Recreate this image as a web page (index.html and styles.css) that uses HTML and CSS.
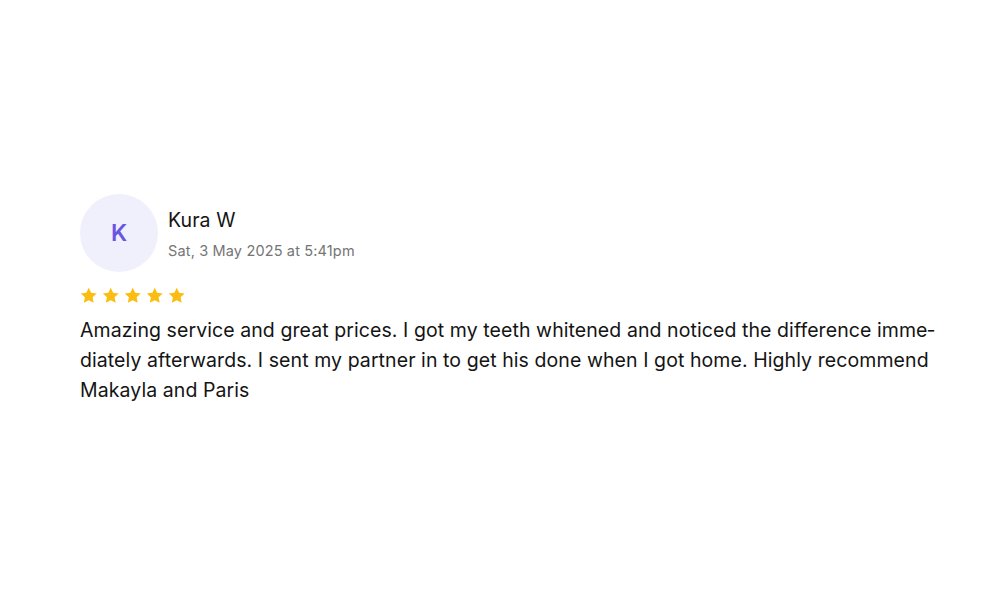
FILE: index.html
```html
<!DOCTYPE html>
<html lang="en">
<head>
<meta charset="utf-8">
<link rel="stylesheet" href="styles.css">
</head>
<body>
<main class="page">
  <article class="review">
    <header class="review-head">
      <div class="avatar">K</div>
      <div class="meta">
        <div class="name">Kura W</div>
        <div class="date">Sat, 3 May 2025 at 5:41pm</div>
      </div>
    </header>
    <div class="stars">
      <svg viewBox="0 0 24 24"><path d="M12 2.2l2.95 6.2 6.8.85-5 4.7 1.3 6.75L12 17.4l-6.05 3.3 1.3-6.75-5-4.7 6.8-.85z"/></svg>
      <svg viewBox="0 0 24 24"><path d="M12 2.2l2.95 6.2 6.8.85-5 4.7 1.3 6.75L12 17.4l-6.05 3.3 1.3-6.75-5-4.7 6.8-.85z"/></svg>
      <svg viewBox="0 0 24 24"><path d="M12 2.2l2.95 6.2 6.8.85-5 4.7 1.3 6.75L12 17.4l-6.05 3.3 1.3-6.75-5-4.7 6.8-.85z"/></svg>
      <svg viewBox="0 0 24 24"><path d="M12 2.2l2.95 6.2 6.8.85-5 4.7 1.3 6.75L12 17.4l-6.05 3.3 1.3-6.75-5-4.7 6.8-.85z"/></svg>
      <svg viewBox="0 0 24 24"><path d="M12 2.2l2.95 6.2 6.8.85-5 4.7 1.3 6.75L12 17.4l-6.05 3.3 1.3-6.75-5-4.7 6.8-.85z"/></svg>
    </div>
    <p class="text">Amazing service and great prices. I got my teeth whitened and noticed the difference imme&shy;diately afterwards. I sent my partner in to get his done when I got home. Highly recommend Makayla and Paris</p>
  </article>
</main>
</body>
</html>
```
FILE: styles.css
```css
* { box-sizing: border-box; }
html, body { margin: 0; background: #fff; }
body {
  font-family: Inter, "Noto Sans", sans-serif;
  color: #141414;
}
.page {
  padding: 194px 40px 0 80px;
}
.review { width: 872px; }
.review-head {
  display: flex;
  align-items: flex-start;
  gap: 10px;
}
.avatar {
  width: 78px;
  height: 78px;
  border-radius: 50%;
  background: #f0effc;
  color: #6a55e3;
  display: flex;
  align-items: center;
  justify-content: center;
  font-size: 23px;
  font-weight: 600;
}
.meta { padding-top: 14px; }
.name {
  font-size: 19.5px;
  line-height: 24px;
  letter-spacing: 0.1px;
}
.date {
  margin-top: 10px;
  font-size: 14.5px;
  line-height: 18px;
  color: #757575;
  letter-spacing: 0.15px;
}
.stars {
  display: flex;
  gap: 2.5px;
  margin-top: 14px;
  margin-left: -1px;
}
.stars svg {
  width: 19.5px;
  height: 19.5px;
  fill: #fbbd12;
}
.text {
  margin: 9px 0 0;
  font-size: 19.5px;
  line-height: 30px;
  letter-spacing: 0.08px;
  hyphens: manual;
}
```
